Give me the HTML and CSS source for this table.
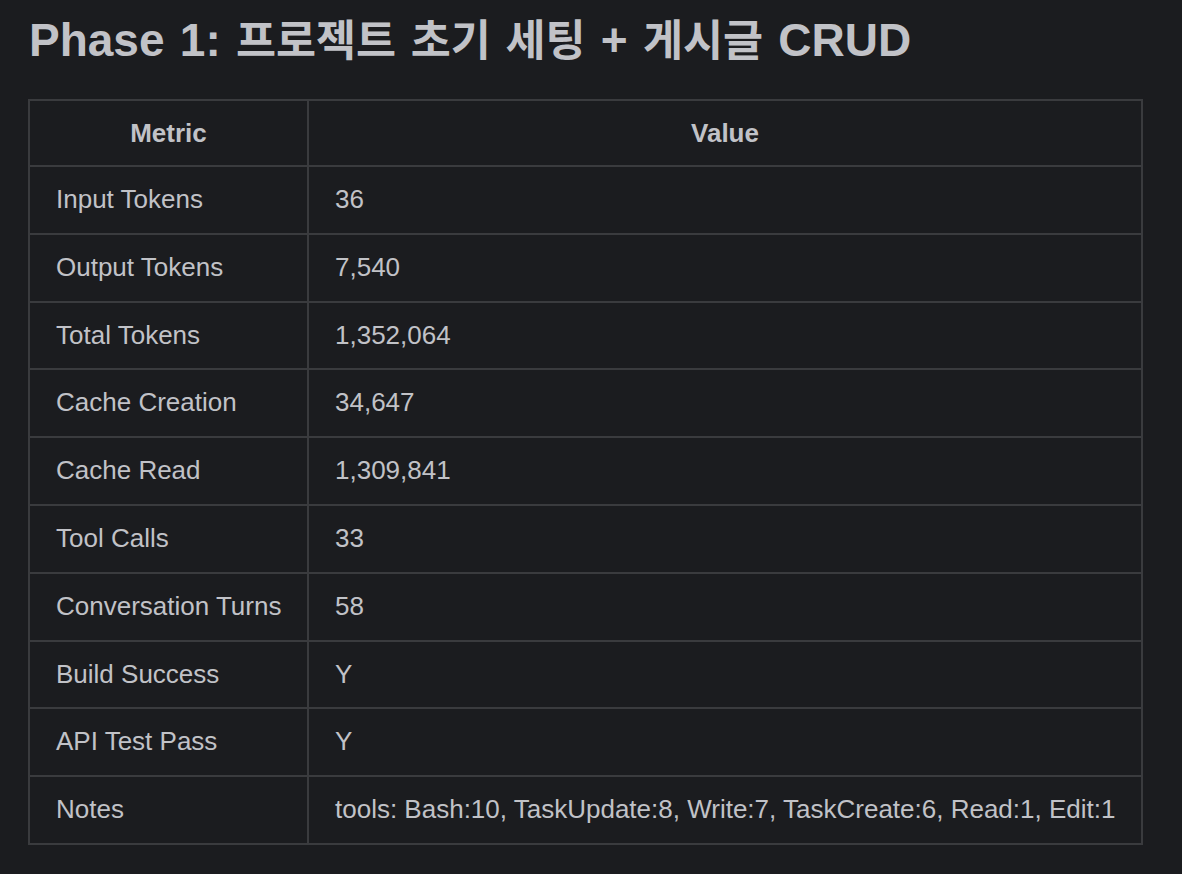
FILE: index.html
```html
<!DOCTYPE html>
<html lang="ko">
<head>
<meta charset="utf-8">
<title>Phase 1</title>
<link rel="stylesheet" href="styles.css">
</head>
<body>
<main class="doc">
  <h2 class="title">Phase 1: <span class="ko">프로젝트 초기 세팅</span> + <span class="ko">게시글</span> CRUD</h2>
  <table class="metrics">
    <colgroup>
      <col class="c-metric">
      <col class="c-value">
    </colgroup>
    <thead>
      <tr><th>Metric</th><th>Value</th></tr>
    </thead>
    <tbody>
      <tr><td>Input Tokens</td><td>36</td></tr>
      <tr><td>Output Tokens</td><td>7,540</td></tr>
      <tr><td>Total Tokens</td><td>1,352,064</td></tr>
      <tr><td>Cache Creation</td><td>34,647</td></tr>
      <tr><td>Cache Read</td><td>1,309,841</td></tr>
      <tr><td>Tool Calls</td><td>33</td></tr>
      <tr><td>Conversation Turns</td><td>58</td></tr>
      <tr><td>Build Success</td><td>Y</td></tr>
      <tr><td>API Test Pass</td><td>Y</td></tr>
      <tr><td>Notes</td><td>tools: Bash:10, TaskUpdate:8, Write:7, TaskCreate:6, Read:1, Edit:1</td></tr>
    </tbody>
  </table>
</main>
</body>
</html>
```

FILE: styles.css
```css
html, body {
  margin: 0;
  padding: 0;
  background: #1b1c1f;
}
body {
  color: #c1c2c7;
  font-family: "Liberation Sans", Arial, "Noto Sans CJK KR", sans-serif;
}
.doc {
  padding: 0 28px 0 28px;
}
.title {
  margin: 0;
  padding-top: 8px;
  height: 99px;
  box-sizing: border-box;
  font-size: 46px;
  line-height: 60px;
  font-weight: 700;
  color: #c1c2c7;
  padding-left: 1px;
  word-spacing: 2.5px;
}
.ko {
  font-family: "Noto Sans CJK KR", sans-serif;
  font-size: 43.5px;
}
.metrics {
  border-collapse: collapse;
  table-layout: fixed;
  width: 1115px;
  font-size: 26px;
}
.c-metric { width: 279px; }
.metrics th,
.metrics td {
  border: 2px solid #3a3b3e;
  padding: 14px 26px;
  line-height: 37.8px;
  text-align: left;
  white-space: nowrap;
}
.metrics th {
  text-align: center;
  font-weight: 700;
  padding-top: 13px;
  padding-bottom: 13px;
  line-height: 38px;
}
```
